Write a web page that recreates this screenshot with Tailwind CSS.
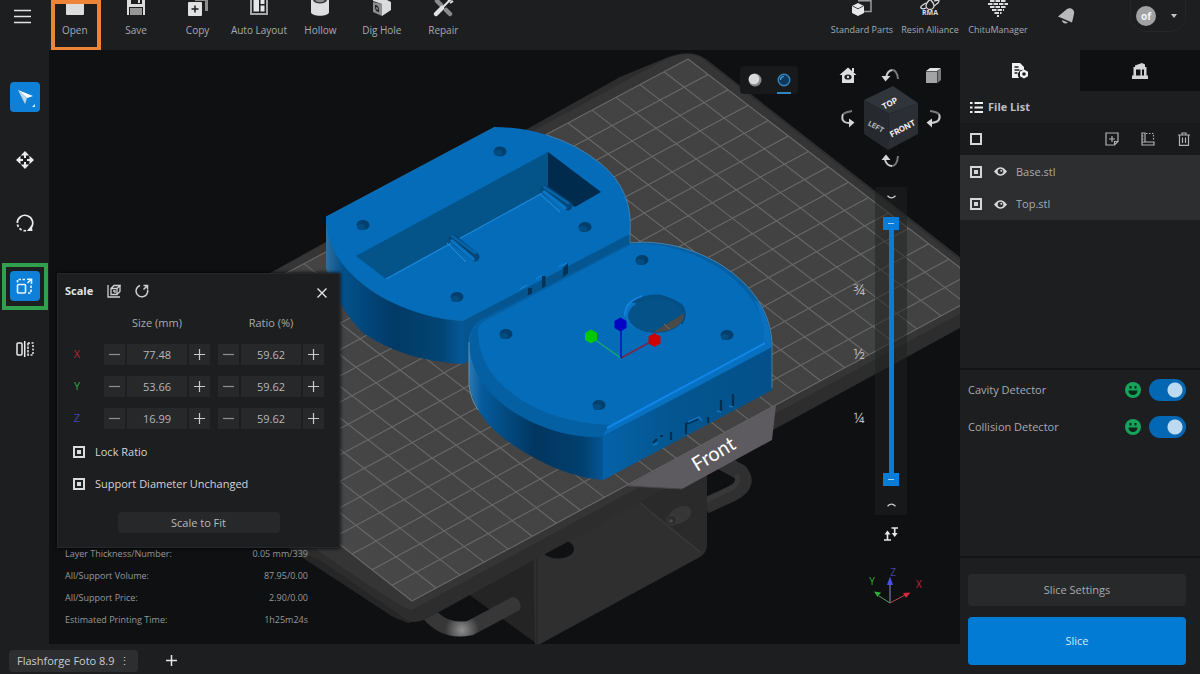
<!DOCTYPE html>
<html lang="en">
<head>
  <meta charset="UTF-8" />
  <meta name="viewport" content="width=device-width, initial-scale=1.0" />
  <title>Flashforge Foto 8.9</title>
  <script src="https://cdn.jsdelivr.net/npm/@tailwindcss/browser@4"></script>
</head>
<body class="h-screen flex flex-col overflow-hidden bg-[#0f1012] text-[#a9abad] text-[11px] leading-4 font-['Open_Sans','Noto_Sans',sans-serif]">

  <!-- Top toolbar -->
  <header class="h-[50px] shrink-0 flex bg-[#1c1e20] text-[10px]">
    <button class="w-[44px] pb-[18px] flex items-center justify-center" aria-label="Menu">
      <svg class="w-[17px] h-[15px]" viewBox="0 0 17 15" stroke="#e4e4e4" stroke-width="1.4"><path d="M0 1.5h17M0 7.5h17M0 13.5h17"/></svg>
    </button>
    <nav class="w-[430px] flex">
      <button class="relative flex-1 basis-0 flex flex-col items-center gap-1">
        <svg class="w-6 h-[18px]" viewBox="0 0 24 18" fill="#dcdcdc"><path d="M3 0h18v14a1 1 0 0 1-1 1H4a1 1 0 0 1-1-1z"/></svg>
        <span>Open</span>
        <span class="absolute left-[7px] top-0 w-[50px] h-[51px] border-4 border-[#ed8437]"></span>
      </button>
      <button class="flex-1 basis-0 flex flex-col items-center gap-1">
        <svg class="w-6 h-[18px]" viewBox="0 0 24 18"><path fill="#dcdcdc" d="M3 0h18v15H3z"/><path fill="#1c1e20" d="M7 0h11v4H7zM5 7h14v8H5z"/><path fill="#dcdcdc" d="M14 0h2v3h-2z"/><path fill="#969696" d="M6 8h12v7H6z"/></svg>
        <span>Save</span>
      </button>
      <button class="flex-1 basis-0 flex flex-col items-center gap-1">
        <svg class="w-6 h-[18px]" viewBox="0 0 24 18"><path fill="#8e8e8e" d="M9 0h13v11h-3V1H9z"/><rect x="2" y="2" width="14" height="14" rx="1" fill="#e2e2e2"/><path stroke="#1c1e20" stroke-width="1.5" d="M9 5.500v7M5.500 9h7"/></svg>
        <span>Copy</span>
      </button>
      <button class="flex-1 basis-0 flex flex-col items-center gap-1">
        <svg class="w-6 h-[18px]" viewBox="0 0 24 18"><path fill="none" stroke="#a8a8a8" stroke-width="2" d="M4 -2v16h16V-2"/><path fill="#e6e6e6" d="M6.500 0H12v11.500H6.500zM13.500 0h4v4h-4zM13.500 5.500h4v6h-4z"/></svg>
        <span class="whitespace-nowrap">Auto Layout</span>
      </button>
      <button class="flex-1 basis-0 flex flex-col items-center gap-1">
        <svg class="w-6 h-[18px]" viewBox="0 0 24 18"><path fill="#dedede" d="M3 0h18v12c0 5-18 5-18 0z"/><ellipse cx="12" cy="0" rx="7" ry="3.500" fill="#3d3f41"/><ellipse cx="12" cy="0" rx="4.500" ry="2" fill="#8d8d8d"/></svg>
        <span>Hollow</span>
      </button>
      <button class="flex-1 basis-0 flex flex-col items-center gap-1">
        <svg class="w-6 h-[18px]" viewBox="0 0 24 18"><path fill="#8d8d8d" d="M3 2l9 2v12l-9-4z"/><path fill="#dcdcdc" d="M3 1V0h14l4 2v8l-9 6V4z"/><path fill="#1c1e20" d="M5 5c3 0 4 2 4 7-3-.5-4-2-4-7z"/><path fill="#8d8d8d" d="M6 7c1.500 0 2 1 2 3-1.500 0-2-1-2-3z"/></svg>
        <span>Dig Hole</span>
      </button>
      <button class="flex-1 basis-0 flex flex-col items-center gap-1">
        <svg class="w-6 h-[18px]" viewBox="0 0 24 18"><path stroke="#8b8b8b" stroke-width="4.500" stroke-linecap="round" d="M6 1l4 4M15 10l4 4"/><path stroke="#e2e2e2" stroke-width="4.500" stroke-linecap="round" d="M5 14l6-6"/><path stroke="#e2e2e2" stroke-width="2" d="M10 9l9-9M17 1l4-2M19 3l3-2"/></svg>
        <span>Repair</span>
      </button>
    </nav>

    <nav class="ml-auto flex text-[9px]">
      <a href="#" class="w-[68px] flex flex-col items-center gap-1">
        <svg class="w-6 h-[18px]" viewBox="0 0 24 18"><path fill="none" stroke="#9b9b9b" stroke-width="1.500" d="M8 .8h13v10.700h-8"/><path fill="#e8e8e8" d="M8 3l6 3v7l-6 3-6-3V6z"/><path fill="none" stroke="#1c1e20" stroke-width=".8" d="M2.500 6L8 8.800 13.500 6"/></svg>
        <span class="whitespace-nowrap">Standard Parts</span>
      </a>
      <a href="#" class="w-[68px] flex flex-col items-center gap-1">
        <svg class="w-6 h-[18px]" viewBox="0 0 24 18" fill="none" stroke="#dcdcdc" stroke-width="1.300"><path d="M12 -1c2 3 4 4 4 6.500a4 4 0 0 1-8 0C8 3 10 2 12-1z"/><path d="M16 1c3-1 5-1 5 0s-2 3-5 5M8 3C4 5 2 7 3 8s3 1 5 0"/><text x="4" y="15" font-size="7" font-weight="700" fill="#dcdcdc" stroke="none">RMA</text></svg>
        <span class="whitespace-nowrap">Resin Alliance</span>
      </a>
      <a href="#" class="w-[68px] flex flex-col items-center gap-1">
        <svg class="w-6 h-[18px]" viewBox="0 0 24 18" stroke="#dcdcdc" stroke-width="1.900" stroke-dasharray="4.500 1"><path d="M4 1h16M2 4h20M4 7h16M6 10h12M8.500 13h7M11 16h2"/></svg>
        <span>ChituManager</span>
      </a>
    </nav>
    <button class="w-[68px] pb-[18px] flex items-center justify-center" aria-label="Notifications">
      <svg class="w-[18px] h-[18px]" viewBox="0 0 18 18" fill="#b9b9b9"><path d="M10 2c4-2 8 1 7 5l-2 8.500L1 9.500z"/><path d="M5 13l6 2.500c-2 2-6 1-6-2.500z"/></svg>
    </button>
    <button class="ml-[30px] mr-[14px] h-8 w-[56px] rounded-b-2xl border-x border-b border-[#242628] flex items-center gap-[15px] pl-[5px]" aria-label="Account">
      <span class="w-5 h-5 rounded-full bg-[#a2a2a2] text-[#f2f2f2] font-bold flex items-center justify-center">of</span>
      <svg class="w-[6px] h-1" viewBox="0 0 6 4" fill="#c4c4c4"><path d="M0 0h6L3 4z"/></svg>
    </button>
  </header>

  <div class="flex-1 min-h-0 flex">
    <div class="flex-1 min-w-0 flex flex-col">
      <div class="flex-1 min-h-0 flex">

        <!-- Tools -->
        <aside class="w-[49px] shrink-0 bg-[#1c1e20] pt-8 flex flex-col items-center gap-[33px]">
          <button class="w-[30px] h-[30px] rounded bg-[#0f80d7] flex items-center justify-center" aria-label="Select">
            <svg class="w-[30px] h-[30px]" viewBox="0 0 30 30"><path fill="#fff" d="M8 8l15 6-6 2z"/><path fill="#bcd6ea" d="M8 8l9 8-2 6z"/><path fill="#d8ecfa" d="M25 22v3h-3z"/></svg>
          </button>
          <button class="w-[30px] h-[30px] flex items-center justify-center" aria-label="Move">
            <svg class="w-[18px] h-[18px]" viewBox="0 0 18 18" fill="#ececec"><path d="M9 0l4.200 4.500H10V7H8V4.500H4.800zM9 18l4.200-4.500H10V11H8v2.500H4.800zM0 9l4.500-4.200V8H7v2H4.500v3.200zM18 9l-4.500-4.200V8H11v2h2.500v3.200z"/></svg>
          </button>
          <button class="w-[30px] h-[30px] flex items-center justify-center" aria-label="Rotate">
            <svg class="w-[18px] h-[18px]" viewBox="0 0 18 18" fill="none" stroke="#ececec" stroke-width="1.700"><path d="M1.300 9a7.700 7.700 0 1 1 13.800 4.700"/><path stroke-dasharray="2.500 2" d="M1.500 10.500a7.700 7.700 0 0 0 9.500 6"/><path fill="#ececec" stroke="none" d="M16.500 17h-5.700l5-6z"/></svg>
          </button>
          <button class="relative w-[30px] h-[30px] rounded bg-[#0f80d7] flex items-center justify-center" aria-label="Scale">
            <svg class="w-[17px] h-[17px]" viewBox="0 0 17 17" fill="none" stroke="#e6f4ff" stroke-width="1.600"><rect x="1.500" y="6.500" width="8" height="8.500" rx="1"/><path stroke-dasharray="2.500 1.500" d="M1.500 4.500V1.500H10M15 7.500V15h-4"/><path d="M11.500 5l3.500-3.500M11 1.300h4.500V6"/></svg>
            <span class="absolute -left-2 -top-2 w-[46px] h-[47px] border-4 border-[#31a04c]"></span>
          </button>
          <button class="w-[30px] h-[30px] flex items-center justify-center" aria-label="Mirror">
            <svg class="w-[18px] h-[16px]" viewBox="0 0 18 16" fill="none" stroke="#ececec" stroke-width="1.500"><rect x="1" y="2" width="5" height="12" rx="1"/><path d="M8.700 0v16"/><path stroke-dasharray="2 1.500" d="M12 2h5v12h-5zM12 2v12"/></svg>
          </button>
        </aside>

        <!-- 3D view -->
        <main class="relative flex-1 overflow-hidden bg-[#0f1012]">
          <svg class="absolute inset-0 w-full h-full" viewBox="49 50 911 594" preserveAspectRatio="xMidYMid slice">
            <defs>
              <linearGradient id="wallBase" x1="326" x2="463" y1="0" y2="0" gradientUnits="userSpaceOnUse">
                <stop offset="0" stop-color="#2e6f9f"/><stop offset=".12" stop-color="#03518b"/><stop offset=".5" stop-color="#013a66"/><stop offset=".85" stop-color="#024575"/><stop offset="1" stop-color="#055a9b"/>
              </linearGradient>
              <linearGradient id="wallTop" x1="469" x2="603" y1="0" y2="0" gradientUnits="userSpaceOnUse">
                <stop offset="0" stop-color="#2a78b2"/><stop offset=".1" stop-color="#055a9b"/><stop offset=".5" stop-color="#01365f"/><stop offset=".85" stop-color="#01406f"/><stop offset="1" stop-color="#045596"/>
              </linearGradient>
              <linearGradient id="faceTop" x1="603" x2="772" y1="0" y2="0" gradientUnits="userSpaceOnUse">
                <stop offset="0" stop-color="#0562a8"/><stop offset=".4" stop-color="#045690"/><stop offset="1" stop-color="#04508a"/>
              </linearGradient>
              <linearGradient id="plateFill" x1="230" x2="800" y1="550" y2="200" gradientUnits="userSpaceOnUse">
                <stop offset="0" stop-color="#4b4c4e"/><stop offset=".3" stop-color="#444444"/><stop offset="1" stop-color="#424242"/>
              </linearGradient>
              <radialGradient id="tubeShine" cx="462" cy="630" r="17" gradientUnits="userSpaceOnUse">
                <stop offset="0" stop-color="#8f8f8f"/><stop offset="1" stop-color="#373737"/>
              </radialGradient>
              <clipPath id="bore"><ellipse cx="656" cy="315" rx="28" ry="17"/></clipPath>
            </defs>

            <!-- bracket under the plate -->
            <path d="M705 506L733 493Q750 484 740 472L718 460" fill="none" stroke="#303030" stroke-width="16"/>
            <path d="M700 503L730 489Q741 483 736 475" fill="none" stroke="#383838" stroke-width="5"/>
            <path d="M460 588L537 644L533 540z" fill="#242424"/>
            <path d="M533 540L640 480L707 460V545Q707 552 700 557L540 644H535z" fill="#2f2f2f"/>
            <path d="M640 503L701 552Q707 548 707 545V460z" fill="#2a2a2a"/>
            <path d="M640 503L700 552" stroke="#393939" stroke-width="1.500"/>
            <path d="M537 550V643" stroke="#292929" stroke-width="2"/>
            <ellipse cx="558" cy="549" rx="16" ry="9.500" fill="#101113"/>
            <ellipse cx="680" cy="515" rx="12" ry="8" fill="#363636" transform="rotate(-28 680 515)"/>
            <circle cx="672" cy="520" r="5" fill="#2d2d2d" stroke="#404040"/>
            <circle cx="671" cy="521" r="1.800" fill="#4a4a4a"/>
            <path d="M423 606Q441 634 470 628L515 604" fill="none" stroke="url(#tubeShine)" stroke-width="15"/>
            <ellipse cx="515" cy="604" rx="5" ry="7.500" fill="#373737" transform="rotate(-28 515 604)"/>

            <!-- build plate -->
            <path d="M60 385L272 272L620 77L666 58Q690 48 706 59L960 257L1000 290V306L960 328L773 430L470 595L428 618Q412 627 392 616L290 549z" fill="#2d2d2d"/>
            <path d="M80 375L272 272L666 59Q690 49 704 60L960 260L1000 292L412 610Q400 608 320 552z" fill="#353535"/>
            <path d="M320 560L410 622Q412 626 392 616L280 543z" fill="#262626"/>
            <path d="M688 59L989 290L412 601L112 366z" fill="url(#plateFill)"/>
            <g id="grid" stroke="#696969" stroke-width="1.100"></g>

            <!-- front plaque -->
            <path d="M627 486L682 489L772 440L776 405z" fill="#5d5b60"/>
            <path d="M627 486L682 489" stroke="#454448"/>
            <text x="697" y="472" transform="rotate(-31 697 472)" class="font-['Lato',sans-serif]" font-size="20" fill="#ffffff">Front</text>

            <!-- Base.stl -->
            <path d="M326 217V268Q336 306 363 333Q404 361 463 364V321Q425 318 387 300Q334 272 326 217z" fill="url(#wallBase)"/>
            <path d="M463 321L630 233V290L463 364z" fill="#045590"/>
            <path d="M326 217L495 127Q522 127 547 135Q578 145 600 163Q634 190 630 234L463 321Q425 319 387 300C350 280 326 252 326 217z" fill="#046cb8"/>
            <path d="M547 135Q578 145 600 163Q634 190 630 234V244" fill="none" stroke="#5f94b5" stroke-width=".6"/>
            <path d="M326 217L495 127" stroke="#1277c0" stroke-width=".8"/>
            <path d="M356 256L548 152V190L386 279z" fill="#045489"/>
            <path d="M548 152L601 192L575 207L548 188z" fill="#012b4c"/>
            <path d="M386 279L548 190" stroke="#1a88dc" stroke-width="1.300"/>
            <path d="M453 239L475 257M545 190L568 206" stroke="#03477a" stroke-width="9" stroke-linecap="round"/>
            <path d="M452 241L473 259M544 192L565 208" stroke="#0b73c0" stroke-width="3.500" stroke-linecap="round"/>
            <path d="M452 236L475 253M544 187L568 203" stroke="#0665aa" stroke-width="2.500" stroke-linecap="round"/>
            <path d="M447 243L466 262M540 194L560 212" stroke="#2590dd" stroke-width="1"/>
            <g fill="#03406d"><ellipse cx="500" cy="151.500" rx="6.500" ry="5"/><ellipse cx="363" cy="225" rx="6.500" ry="5"/><ellipse cx="585" cy="227" rx="6.500" ry="5"/><ellipse cx="457" cy="297" rx="6.500" ry="5"/></g>
            <g fill="#024d82"><ellipse cx="498" cy="153" rx="4" ry="3"/><ellipse cx="361" cy="227" rx="4" ry="3"/><ellipse cx="583" cy="229" rx="4" ry="3"/><ellipse cx="455" cy="299" rx="4" ry="3"/></g>
            <path d="M528 288h4v7l-4 2zM542 276h3.500v11l-3.500 2zM563 268l5-5v10l-5 4z" fill="#023457"/>
            <path d="M520 289l7-4M536 279l6-4M558 267l9-4" stroke="#1a88dc" stroke-width="1"/>

            <!-- Top.stl -->
            <path d="M469 342Q470 326 482 319L630 243C690 236 772 278 772 347V390L603 480Q560 477 510 443Q470 415 469 377z" fill="url(#wallTop)"/>
            <path d="M603 436L772 346V390L603 480z" fill="url(#faceTop)"/>
            <path d="M469 345Q470 326 482 319L630 243C690 236 772 278 772 347L603 437C550 440 473 405 469 345z" fill="#055fa3"/>
            <path d="M478 330Q478 325 484 321L632 244C690 240 766 282 765 342L611 425C550 425 477 390 478 330z" fill="#046cb8"/>
            <path d="M630 243C690 236 772 278 772 347V388" fill="none" stroke="#5f94b5" stroke-width=".7"/>
            <path d="M760 304Q771 325 771 347L764 342Q765 322 754 300z" fill="#0b70bd"/>
            <path d="M603 436Q606 428 612 425L764 343L772 347z" fill="#0870c0"/>
            <path d="M607 428L765 343" stroke="#1086e8" stroke-width="2"/>
            <path d="M469 342V385Q471 400 478 410" fill="none" stroke="#5b94ba" stroke-width="1"/>
            <ellipse cx="656" cy="314" rx="31" ry="19" fill="#0a75c8"/>
            <path d="M631 302Q656 286 682 304Q690 314 682 325L676 316z" fill="#034e85"/>
            <ellipse cx="656" cy="316" rx="28" ry="17" fill="#045287"/>
            <g clip-path="url(#bore)"><path d="M650 334L690 310V340z" fill="#4a4a48"/><path d="M664 324l10 9" stroke="#707070"/></g>
            <path d="M625 316Q624 302 642 296" fill="none" stroke="#1686df" stroke-width="1.500"/>
            <g fill="#03406d"><ellipse cx="642" cy="260" rx="6.500" ry="5"/><ellipse cx="506" cy="334" rx="6.500" ry="5"/><ellipse cx="727" cy="335" rx="6.500" ry="5"/><ellipse cx="599" cy="405" rx="6.500" ry="5"/></g>
            <g fill="#024d82"><ellipse cx="640" cy="262" rx="4" ry="3"/><ellipse cx="504" cy="336" rx="4" ry="3"/><ellipse cx="725" cy="337" rx="4" ry="3"/><ellipse cx="597" cy="407" rx="4" ry="3"/></g>
            <path d="M653 443l4-4M660 436h3M671 432v8M686 434v-10l12-5M708 417v6M721 400v11M733 394v12" fill="none" stroke="#022f50" stroke-width="2.200"/>
            <path d="M653 445l5-2M688 422l11-5 3 4M717 411l4 1M729 406l4 1" fill="none" stroke="#0e74c2" stroke-width="1.500"/>

            <!-- move gizmo -->
            <path d="M621 358L591 337" stroke="#19a974" stroke-width="1.500"/>
            <path d="M621 358L654 340" stroke="#7a2548" stroke-width="1.500"/>
            <path d="M621 358V324" stroke="#1010b8" stroke-width="1.500"/>
            <path d="M591 329.500l6 3.500v7l-6 3.500-6-3.500v-7z" fill="#05c805"/>
            <path d="M620.500 317.500l6 3.500v7l-6 3.500-6-3.500v-7z" fill="#0404c4"/>
            <path d="M654.500 333l6 3.500v7l-6 3.500-6-3.500v-7z" fill="#cb0505"/>
          </svg>

          <!-- Render mode -->
          <div class="absolute right-[162px] top-4 w-[58px] h-7 rounded bg-[#17191b] flex justify-around items-end">
            <button class="h-[22px] border-b-2 border-transparent" aria-label="Solid">
              <svg class="w-[14px] h-[14px] mb-[5px]" viewBox="0 0 14 14"><circle cx="7" cy="7" r="6.500" fill="#8a8a8a"/><circle cx="6" cy="6" r="5.300" fill="#d9d9d9"/></svg>
            </button>
            <button class="h-[22px] border-b-2 border-[#3486bf]" aria-label="Shaded">
              <svg class="w-[14px] h-[14px] mb-[5px]" viewBox="0 0 14 14"><circle cx="7" cy="7" r="5.800" fill="#0d3a5c" stroke="#3486bf" stroke-width="1.400"/><path d="M3.500 7A3.500 3.500 0 0 1 7 3.500" stroke="#4ea3dc" stroke-width="1.200" fill="none"/></svg>
            </button>
          </div>

          <!-- View cube -->
          <svg class="absolute right-[14px] top-3 w-[110px] h-[110px]" viewBox="836 62 110 110" font-family="Inter, sans-serif" font-weight="700" fill="#f4f4f4" text-anchor="middle">
            <path fill="#dedede" d="M848 67.500l8.500 7.500h-2.500v8h-12v-8h-2.500zM852 68h2v4h-2z"/><ellipse cx="848" cy="77" rx="3.600" ry="2.600" fill="#1a1b1d"/><circle cx="848" cy="77" r="1.200" fill="#dedede"/>
            <path fill="#e2e2e2" d="M926 71l4-3h11l-4 3z"/><path fill="#a4a4a4" d="M926 71.500h11V83h-11z"/><path fill="#7c7c7c" d="M937.500 71l3.500-3v12l-3.500 3z"/>
            <g fill="none" stroke="#c9c9c9" stroke-width="2">
              <path d="M886 78Q887 71 892 70"/><path stroke="#77797b" d="M892 70Q897 70 898 79"/>
              <path d="M843 114Q840 123 850 123"/><path stroke="#77797b" d="M843 114Q846 112 852 111"/>
              <path d="M939 114Q942 122 931 123"/><path stroke="#77797b" d="M939 114Q937 112 930 111"/>
              <path d="M885 160Q887 166 892 166"/><path stroke="#77797b" d="M892 166Q897 166 898 156"/>
            </g>
            <path fill="#d6d6d6" d="M881.500 76h9l-5 5.500zM849 118.500l5.500 4-5.500 5zM932 118.500l-5.500 4 5.500 5zM881.500 160h9l-4.500-5.500z"/>
            <path fill="#30353b" d="M893 86L918 103L889 114L864 100z"/>
            <path fill="#262a2f" d="M864 100L889 114L888 150L864 134z"/>
            <path fill="#2b2f35" d="M889 114L918 103V134L888 150z"/>
            <text x="891" y="106" font-size="8" transform="rotate(-28 891 106)">TOP</text>
            <text x="875" y="129" font-size="7" fill="#b9bcc0" transform="rotate(28 875 129)">LEFT</text>
            <text x="904" y="131" font-size="8" transform="rotate(-28 904 131)">FRONT</text>
          </svg>

          <!-- Layer range -->
          <div class="absolute right-[95px] top-[229px] flex flex-col gap-11 text-[15px] leading-5 text-[#bdbdbd]">
            <span>¾</span><span>½</span><span>¼</span>
          </div>
          <div class="absolute right-[53px] top-[137px] w-8 h-[328px] bg-[#1d1f20]/50 flex flex-col items-center justify-between py-2">
            <button aria-label="Upper layer down"><svg class="w-[9px] h-[5px]" viewBox="0 0 9 5" fill="none" stroke="#c9c9c9" stroke-width="1.300"><path d="M.5.8Q4.500 5 8.500.8"/></svg></button>
            <div class="relative w-4 h-[269px] flex justify-center">
              <div class="w-[5px] h-full bg-[#0b7cd6]"></div>
              <input type="range" value="100" aria-label="Upper layer" class="absolute inset-0 w-4 h-full m-0 appearance-none bg-transparent [writing-mode:vertical-lr] [direction:rtl] [&::-webkit-slider-thumb]:appearance-none [&::-webkit-slider-thumb]:w-4 [&::-webkit-slider-thumb]:h-[13px] [&::-webkit-slider-thumb]:bg-[#0b7cd6] [&::-webkit-slider-thumb]:bg-[linear-gradient(#9fd2fa,#9fd2fa)] [&::-webkit-slider-thumb]:bg-[length:6px_1px] [&::-webkit-slider-thumb]:bg-center [&::-webkit-slider-thumb]:bg-no-repeat" />
              <input type="range" value="0" aria-label="Lower layer" class="absolute inset-0 w-4 h-full m-0 appearance-none bg-transparent [writing-mode:vertical-lr] [direction:rtl] [&::-webkit-slider-thumb]:appearance-none [&::-webkit-slider-thumb]:w-4 [&::-webkit-slider-thumb]:h-[13px] [&::-webkit-slider-thumb]:bg-[#0b7cd6] [&::-webkit-slider-thumb]:bg-[linear-gradient(#9fd2fa,#9fd2fa)] [&::-webkit-slider-thumb]:bg-[length:6px_1px] [&::-webkit-slider-thumb]:bg-center [&::-webkit-slider-thumb]:bg-no-repeat" />
            </div>
            <button aria-label="Lower layer up"><svg class="w-[9px] h-[5px]" viewBox="0 0 9 5" fill="none" stroke="#c9c9c9" stroke-width="1.300"><path d="M.5 4.200Q4.500 0 8.500 4.200"/></svg></button>
          </div>
          <button class="absolute right-[62px] top-[477px]" aria-label="Toggle range">
            <svg class="w-[14px] h-[14px]" viewBox="0 0 14 14" fill="none" stroke="#e8e8e8" stroke-width="1.600"><path d="M0 13h7M3.500 13V5M7.500 1H14M10.700 1v7"/><path fill="#e8e8e8" stroke="none" d="M.5 7.500h6l-3-4zM7.700 6h6l-3 4z"/></svg>
          </button>

          <!-- Axes -->
          <svg class="absolute right-[32px] top-[515px] w-[64px] h-[44px]" viewBox="864 565 64 44" font-size="10" text-anchor="middle">
            <path stroke="#8d8fc4" d="M890 603V584"/><path stroke="#5c9c62" d="M890 603L879 596"/><path stroke="#b04a55" d="M890 603L905 595"/>
            <path fill="#4a50e0" d="M887 585h6l-3-8.500z"/><path fill="#2fae3a" d="M874 591.500l7 1-3.500 4.500z"/><path fill="#d02a3c" d="M910.500 592.500l-7.500.5 3 5z"/>
            <text x="893" y="576" fill="#43469c">Z</text><text x="872" y="585" fill="#2fae3a">Y</text><text x="919" y="588" fill="#c22438">X</text>
          </svg>

          <!-- Print info -->
          <dl class="absolute left-4 bottom-[13px] w-[243px] grid grid-cols-[auto_auto] text-[9px] leading-[22px] text-[#97999b]">
            <dt>Layer Thickness/Number:</dt><dd class="text-right">0.05 mm/339</dd>
            <dt>All/Support Volume:</dt><dd class="text-right">87.95/0.00</dd>
            <dt>All/Support Price:</dt><dd class="text-right">2.90/0.00</dd>
            <dt>Estimated Printing Time:</dt><dd class="text-right">1h25m24s</dd>
          </dl>

          <!-- Scale dialog -->
          <form class="absolute left-2 top-[223px] w-[283px] bg-[#1c1e20] border border-[#26282a] shadow-[0_0_4px_#000] pb-[14px]">
            <div class="h-[33px] flex items-center pl-[7px] pr-3">
              <h2 class="font-bold text-[#e3e3e3] w-[42px]">Scale</h2>
              <button type="button" aria-label="Scale to axis" class="w-[28px]">
                <svg class="w-[14px] h-[14px]" viewBox="0 0 14 14" fill="none" stroke="#cfcfcf" stroke-width="1.300"><path d="M1 1v12h12M4 4.500h6v6H4zM4 4.500l3-3h6l-3 3M13 1.500v6l-3 3M6 7h2v2"/></svg>
              </button>
              <button type="button" aria-label="Reset">
                <svg class="w-[14px] h-[14px]" viewBox="0 0 14 14" fill="none" stroke="#cfcfcf" stroke-width="1.500"><path d="M5 1.500a5.800 5.800 0 1 0 7.500 4"/><path d="M8.500 5.500l4-4M8.500 1.500h4V5"/></svg>
              </button>
              <button type="button" aria-label="Close" class="ml-auto pt-1">
                <svg class="w-[10px] h-[10px]" viewBox="0 0 10 10" stroke="#e6e6e6" stroke-width="1.400"><path d="M.5.5l9 9M9.500.5l-9 9"/></svg>
              </button>
            </div>
            <div class="flex gap-2 pl-[46px] h-[31px] items-center text-center">
              <span class="w-[106px]">Size (mm)</span>
              <span class="w-[106px]">Ratio (%)</span>
            </div>
            <div id="axes"></div>
            <div class="pt-[2px] text-[#d4d4d4]">
              <label class="flex items-center gap-[10px] h-8 pl-[15px]">
                <input type="checkbox" checked class="appearance-none w-3 h-3 border-2 border-[#dcdcdc] bg-clip-content p-[2px] checked:bg-[#dcdcdc]" />Lock Ratio
              </label>
              <label class="flex items-center gap-[10px] h-8 pl-[15px]">
                <input type="checkbox" checked class="appearance-none w-3 h-3 border-2 border-[#dcdcdc] bg-clip-content p-[2px] checked:bg-[#dcdcdc]" />Support Diameter Unchanged
              </label>
            </div>
            <button type="button" class="block mx-auto mt-3 w-[162px] h-[21px] bg-[#27282a] rounded-sm text-[#b9bbbd]">Scale to Fit</button>
          </form>
        </main>
      </div>

      <!-- Printer tabs -->
      <footer class="h-[30px] shrink-0 bg-[#1c1e20] flex items-center gap-7 pl-[9px] pt-1 pb-px">
        <button class="w-[129px] h-[22px] rounded bg-[#2c2e30] text-[#cdcdcd] flex items-center justify-between px-2">
          <span>Flashforge Foto 8.9</span><span>⋮</span>
        </button>
        <button aria-label="Add printer"><svg class="w-[11px] h-[11px]" viewBox="0 0 11 11" stroke="#e6e6e6" stroke-width="1.500"><path d="M5.500 0v11M0 5.500h11"/></svg></button>
      </footer>
    </div>

    <!-- Right panel -->
    <aside class="w-60 shrink-0 flex flex-col bg-[#1c1e20]">
      <div class="h-[41px] flex">
        <button class="flex-1 flex items-center justify-center" aria-label="File settings">
          <svg class="w-[18px] h-[18px]" viewBox="0 0 18 18"><path fill="#f2f2f2" d="M1 1h8l4 4v3a5 5 0 0 0-5 8H1z"/><path stroke="#1c1e20" stroke-width="1.300" d="M3.500 5h4M3.500 8h5M3.500 11h3"/><path fill="#f2f2f2" d="M13 7.500l4 2.300v4.400l-4 2.300-4-2.300V9.800z"/><circle cx="13" cy="12" r="1.800" fill="#1c1e20"/></svg>
        </button>
        <button class="flex-1 flex items-center justify-center bg-[#0f1012]" aria-label="Printer">
          <svg class="w-4 h-4" viewBox="0 0 16 16" fill="#d4d4d4"><path d="M3 2.500l7-2.500 3 1.500V5H3z"/><path fill-rule="evenodd" d="M1.500 4h13v8.500H16V16H0v-3.500h1.500zM4 6.500v6h4.500v-6zM10 6.500v6h2v-6z"/></svg>
        </button>
      </div>
      <section class="flex-[3] border-b-2 border-[#131416]">
        <h2 class="h-8 flex items-center gap-[5px] pl-[10px] font-bold text-[#bcbec0]">
          <svg class="w-[13px] h-[11px]" viewBox="0 0 13 11" stroke="#efefef" stroke-width="2"><path d="M0 1h2.500M4.500 1H13M0 5.500h2.500M4.500 5.500H13M0 10h2.500M4.500 10H13"/></svg>
          File List
        </h2>
        <div class="h-8 bg-[#191a1c] flex items-center gap-[22px] pl-[10px] pr-[9px]">
          <input type="checkbox" aria-label="Select all" class="appearance-none w-3 h-3 mr-auto border-2 border-[#d6d6d6]" />
          <button aria-label="Add file"><svg class="w-[14px] h-[14px]" viewBox="0 0 14 14" fill="none" stroke="#b2b2b2" stroke-width="1.200"><path d="M1 1h12v8.500L9.500 13H1zM13 9.500H9.500V13M7 4v6M4 7h6"/></svg></button>
          <button aria-label="Group"><svg class="w-[14px] h-[14px]" viewBox="0 0 14 14" fill="none" stroke="#b2b2b2" stroke-width="1.200"><path d="M4 10V1H1v12h12v-3H1M1 4h1.500M1 7h1.500"/><path stroke-dasharray="1.500 1.500" d="M5 1.500h7.500V9"/></svg></button>
          <button aria-label="Delete"><svg class="w-[14px] h-[14px]" viewBox="0 0 14 14" fill="none" stroke="#b2b2b2" stroke-width="1.200"><path d="M1 3h12M2.500 3v10.400h9V3M5 3V1h4v2M5.500 5.500v5.500M8.500 5.500v5.500"/></svg></button>
        </div>
        <ul class="bg-[#2d2e30]">
          <li class="h-[33px] flex items-center pl-[10px]">
            <input type="checkbox" checked aria-label="Base.stl" class="appearance-none w-3 h-3 border-2 border-[#d6d6d6] bg-clip-content p-[2px] checked:bg-[#d6d6d6]" />
            <svg class="ml-3 mr-[9px] w-[13px] h-[9px]" viewBox="0 0 13 9"><path fill="#dadada" d="M0 4.500Q6.500-4 13 4.500Q6.500 13 0 4.500z"/><circle cx="6.500" cy="4.500" r="2.800" fill="#2d2e30"/><circle cx="7.300" cy="3.700" r="1" fill="#dadada"/></svg>
            Base.stl
          </li>
          <li class="h-8 flex items-center pl-[10px]">
            <input type="checkbox" checked aria-label="Top.stl" class="appearance-none w-3 h-3 border-2 border-[#d6d6d6] bg-clip-content p-[2px] checked:bg-[#d6d6d6]" />
            <svg class="ml-3 mr-[9px] w-[13px] h-[9px]" viewBox="0 0 13 9"><path fill="#dadada" d="M0 4.500Q6.500-4 13 4.500Q6.500 13 0 4.500z"/><circle cx="6.500" cy="4.500" r="2.800" fill="#2d2e30"/><circle cx="7.300" cy="3.700" r="1" fill="#dadada"/></svg>
            Top.stl
          </li>
        </ul>
      </section>
      <section class="flex-[2] pt-px border-b-2 border-[#131416]">
        <label class="h-[37px] flex items-center gap-2 pl-2 pr-[14px]">
          <span class="mr-auto">Cavity Detector</span>
          <svg class="w-4 h-4" viewBox="0 0 16 16"><circle cx="8" cy="8" r="8" fill="#16a35a"/><path fill="#0d2618" d="M3.500 8.500h9c0 6-9 6-9 0zM4.500 4h2v2.500h-2zM9.500 4h2v2.500h-2z"/></svg>
          <input type="checkbox" checked class="appearance-none w-[37px] h-[22px] rounded-full bg-[#444] checked:bg-[#0467b3] bg-[radial-gradient(circle_at_26px_11px,#bcdaf2_7px,transparent_8px)]" />
        </label>
        <label class="h-[37px] flex items-center gap-2 pl-2 pr-[14px]">
          <span class="mr-auto">Collision Detector</span>
          <svg class="w-4 h-4" viewBox="0 0 16 16"><circle cx="8" cy="8" r="8" fill="#16a35a"/><path fill="#0d2618" d="M3.500 8.500h9c0 6-9 6-9 0zM4.500 4h2v2.500h-2zM9.500 4h2v2.500h-2z"/></svg>
          <input type="checkbox" checked class="appearance-none w-[37px] h-[22px] rounded-full bg-[#444] checked:bg-[#0467b3] bg-[radial-gradient(circle_at_26px_11px,#bcdaf2_7px,transparent_8px)]" />
        </label>
      </section>
      <div class="pl-2 pr-[14px] pt-4 pb-[9px] flex flex-col gap-[11px]">
        <button class="h-8 rounded-sm bg-[#28292b] text-[#a9abad]">Slice Settings</button>
        <button class="h-12 rounded-sm bg-[#027bd4] text-[#d4eaf9]">Slice</button>
      </div>
    </aside>
  </div>

  <script>
    // 24 x 15 cells between the four corners of the plate
    const back = [688, 59], right = [989, 290], front = [412, 601], left = [112, 366];
    const mix = (a, b, t) => [a[0] + (b[0] - a[0]) * t, a[1] + (b[1] - a[1]) * t];
    const line = (a, b) => `<line x1="${a[0]}" y1="${a[1]}" x2="${b[0]}" y2="${b[1]}"/>`;
    let lines = '';
    for (let i = 0; i <= 24; i++) lines += line(mix(back, left, i / 24), mix(right, front, i / 24));
    for (let i = 0; i <= 15; i++) lines += line(mix(back, right, i / 15), mix(left, front, i / 15));
    document.getElementById('grid').innerHTML = lines;

    const stepper = (label, value) => `
      <div class="flex gap-[2px] w-[106px]">
        <button type="button" aria-label="Decrease ${label}" class="w-[21px] h-[21px] bg-[#27282a] flex items-center justify-center"><svg class="w-[11px] h-[11px]" viewBox="0 0 11 11" stroke="#8f8f8f" stroke-width="1.2"><path d="M0 5.500h11"/></svg></button>
        <input type="text" value="${value}" aria-label="${label}" class="w-[60px] h-[21px] bg-[#27282a] text-center text-[#b5b7b9]" />
        <button type="button" aria-label="Increase ${label}" class="w-[21px] h-[21px] bg-[#27282a] flex items-center justify-center"><svg class="w-[11px] h-[11px]" viewBox="0 0 11 11" stroke="#c9c9c9" stroke-width="1.2"><path d="M5.500 0v11M0 5.500h11"/></svg></button>
      </div>`;
    const axes = [
      ['X', '77.48', 'text-[#bd2133]'],
      ['Y', '53.66', 'text-[#2fa845]'],
      ['Z', '16.99', 'text-[#4247b5]'],
    ];
    document.getElementById('axes').innerHTML = axes.map(([name, size, color]) => `
      <div class="flex items-center gap-2 h-8">
        <span class="w-[38px] text-center ${color}">${name}</span>
        ${stepper(name + ' size', size)}
        ${stepper(name + ' ratio', '59.62')}
      </div>`).join('');
  </script>
</body>
</html>
